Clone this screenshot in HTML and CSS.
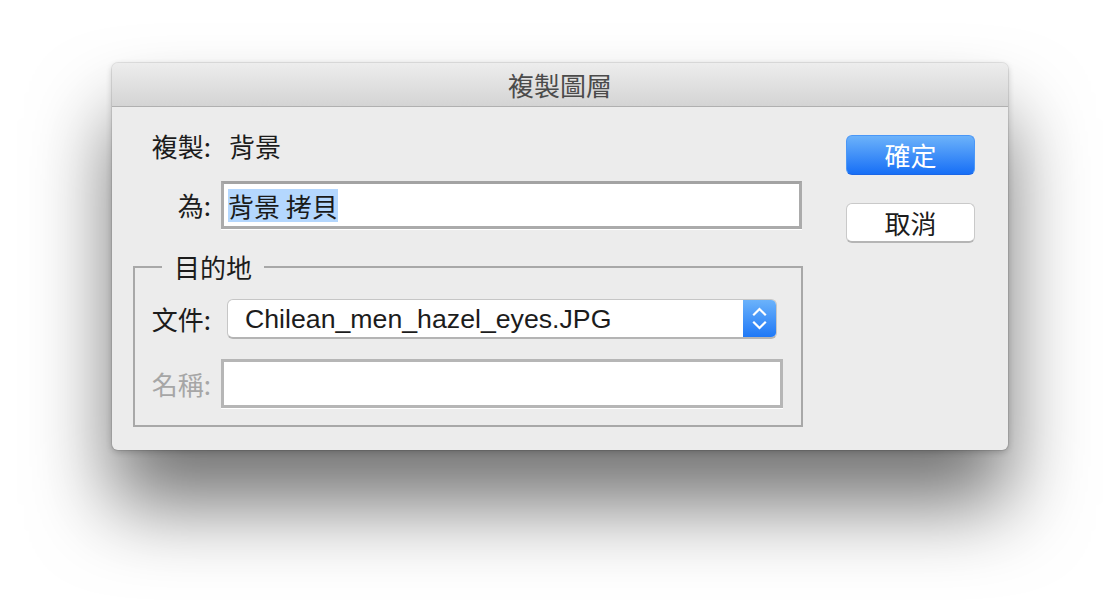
FILE: index.html
```html
<!DOCTYPE html>
<html lang="zh-Hant">
<head>
<meta charset="utf-8">
<title>複製圖層</title>
<link rel="stylesheet" href="styles.css">
</head>
<body>
<div class="window">
  <div class="titlebar">複製圖層</div>
  <div class="content">
    <div class="form">
      <div class="row row-info">
        <span class="label">複製:</span>
        <span class="value">背景</span>
      </div>
      <div class="row row-name">
        <span class="label">為:</span>
        <div class="field field-main"><span class="sel">背景 拷貝</span></div>
      </div>
      <fieldset class="dest">
        <legend>目的地</legend>
        <div class="row row-doc">
          <span class="label label-inset">文件:</span>
          <div class="popup">
            <span class="popup-text">Chilean_men_hazel_eyes.JPG</span>
            <span class="popup-arrows">
              <svg width="33" height="40" viewBox="0 0 33 40">
                <polyline points="11,15.5 16.5,10 22,15.5" fill="none" stroke="#fff" stroke-width="2.2" stroke-linecap="square"/>
                <polyline points="11,23.5 16.5,29 22,23.5" fill="none" stroke="#fff" stroke-width="2.2" stroke-linecap="square"/>
              </svg>
            </span>
          </div>
        </div>
        <div class="row row-layer">
          <span class="label label-inset disabled">名稱:</span>
          <div class="field field-disabled"></div>
        </div>
      </fieldset>
    </div>
    <div class="buttons">
      <button class="btn btn-primary">確定</button>
      <button class="btn btn-default">取消</button>
    </div>
  </div>
</div>
</body>
</html>
```

FILE: styles.css
```css
* {
  box-sizing: border-box;
}

html {
  background: #ffffff;
  height: 100%;
}

body {
  margin: 0;
  min-height: 610px;
  padding: 63px 0 0 112px;
  font-family: "Noto Sans CJK TC", "Liberation Sans", sans-serif;
  font-size: 26px;
  color: #1c1c1c;
}

.window {
  width: 896px;
  height: 387px;
  background: #ececec;
  border-radius: 6px;
  box-shadow:
    0 0 0 1px rgba(0, 0, 0, 0.08),
    0 2px 6px rgba(0, 0, 0, 0.2),
    0 55px 80px rgba(0, 0, 0, 0.55);
}

.titlebar {
  height: 44px;
  padding-top: 2px;
  line-height: 40px;
  text-align: center;
  color: #4b4b4b;
  font-size: 26px;
  background: linear-gradient(#ededed, #d4d4d4);
  border-bottom: 1px solid #b0b0b0;
  border-radius: 6px 6px 0 0;
}

.content {
  display: flex;
  padding: 0 33px 0 21px;
}

.form {
  width: 670px;
  display: flex;
  flex-direction: column;
}

.row {
  display: flex;
  align-items: center;
}

.label {
  width: 78px;
  flex: none;
  text-align: right;
  white-space: nowrap;
  line-height: 40px;
}

.label-inset {
  width: 76px;
}

.disabled {
  color: #a6a6a6;
}

.row-info {
  margin-top: 19px;
  height: 40px;
  margin-bottom: 2px;
}

.value {
  margin-left: 18px;
  line-height: 40px;
}

.row-name {
  margin-top: 13px;
}

.field {
  background: #ffffff;
  border: 3px solid #ababab;
  border-top-color: #a3a3a3;
  box-shadow: 0 1px 0 #ffffff;
}

.field-main {
  margin-left: 10px;
  width: 581px;
  height: 48px;
  padding-left: 4px;
  display: flex;
  align-items: center;
}

.sel {
  display: inline-block;
  background: #b4d7fe;
  line-height: 33px;
  height: 33px;
  white-space: pre;
  color: #1a1a1a;
}

.dest {
  margin: 23px 0 0 0;
  padding: 0 0 17px 0;
  min-width: 0;
  width: 670px;
  border: 2px solid #a8a8a8;
}

.dest legend {
  margin-left: 27px;
  padding: 0 12px;
  line-height: 30px;
  color: #1c1c1c;
}

.row-doc {
  margin-top: 17px;
}

.popup {
  margin-left: 16px;
  width: 550px;
  height: 40px;
  display: flex;
  align-items: center;
  background: #ffffff;
  border: 1px solid #c6c6c6;
  border-bottom: 2px solid #b4b4b4;
  border-radius: 6px;
  overflow: hidden;
}

.popup-text {
  flex: 1;
  padding-left: 17px;
  font-family: "Liberation Sans", sans-serif;
  font-size: 26.7px;
  color: #1c1c1c;
  line-height: 38px;
}

.popup-arrows {
  width: 33px;
  height: 40px;
  align-self: stretch;
  margin: -1px 0 -2px 0;
  background: linear-gradient(#6db4fb, #1b75f6);
  display: flex;
}

.popup-arrows svg {
  display: block;
}

.row-layer {
  margin-top: 20px;
}

.field-disabled {
  margin-left: 10px;
  width: 562px;
  height: 49px;
  border-color: #b6b6b6;
}

.buttons {
  margin-left: auto;
  padding-top: 28px;
  display: flex;
  flex-direction: column;
  gap: 28px;
}

.btn {
  width: 129px;
  height: 40px;
  border-radius: 6px;
  font-family: "Noto Sans CJK TC", "Liberation Sans", sans-serif;
  font-size: 26px;
  line-height: 36px;
  padding: 0;
  cursor: default;
}

.btn-primary {
  color: #ffffff;
  border: 1px solid #4a97f7;
  border-bottom-color: #1b66e6;
  background: linear-gradient(#6cb2fa, #176ff6);
}

.btn-default {
  color: #1c1c1c;
  background: #ffffff;
  border: 1px solid #c9c9c9;
  border-bottom: 2px solid #b5b5b5;
}
```
